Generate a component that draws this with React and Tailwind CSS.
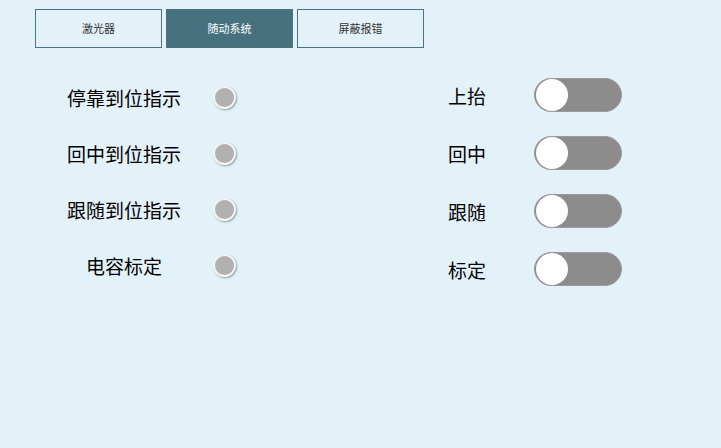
import React from 'react';

const tabs = ['激光器', '随动系统', '屏蔽报错'];
const indicators = ['停靠到位指示', '回中到位指示', '跟随到位指示', '电容标定'];
const switches = ['上抬', '回中', '跟随', '标定'];

const Indicator = () => (
  <div className="w-[23px] h-[23px] rounded-full bg-[#b0b0b0] border-2 border-[#f4f4f4] shadow-[1px_1px_2px_rgba(0,0,0,0.35)]" />
);

const Toggle = () => (
  <div className="w-[88px] h-[34px] rounded-full bg-[#8c8c8c] border border-[#9a9a9a] flex items-center pl-px">
    <div className="w-[32px] h-[32px] rounded-full bg-white" />
  </div>
);

export default function App() {
  return (
    <div
      className="w-[721px] h-[448px] bg-[#e3f2f8] overflow-hidden"
      style={{ fontFamily: '"Noto Sans CJK SC", "Noto Sans", sans-serif' }}
    >
      {/* tabs */}
      <div className="flex gap-[4px] pl-[35px] pt-[9px]">
        {tabs.map((t, i) => (
          <div
            key={t}
            className={`w-[127px] h-[39px] flex items-center justify-center text-[11px] leading-none border border-[#4b7482] ${
              i === 1 ? 'bg-[#46727f] text-white' : 'text-[#333]'
            }`}
          >
            {t}
          </div>
        ))}
      </div>

      <div className="flex">
        {/* indicators */}
        <div className="flex flex-col pl-[67px] pt-[21px]">
          {indicators.map((t) => (
            <div key={t} className="h-[56px] flex items-center">
              <div className="w-[114px] text-center text-[19px] leading-none text-black">{t}</div>
              <div className="ml-[32px]">
                <Indicator />
              </div>
            </div>
          ))}
        </div>

        {/* switches */}
        <div className="flex flex-col pl-[212px] pt-[18px]">
          {switches.map((t) => (
            <div key={t} className="h-[58px] flex items-center">
              <div className="w-[86px] text-[19px] leading-none text-black">{t}</div>
              <Toggle />
            </div>
          ))}
        </div>
      </div>
    </div>
  );
}
